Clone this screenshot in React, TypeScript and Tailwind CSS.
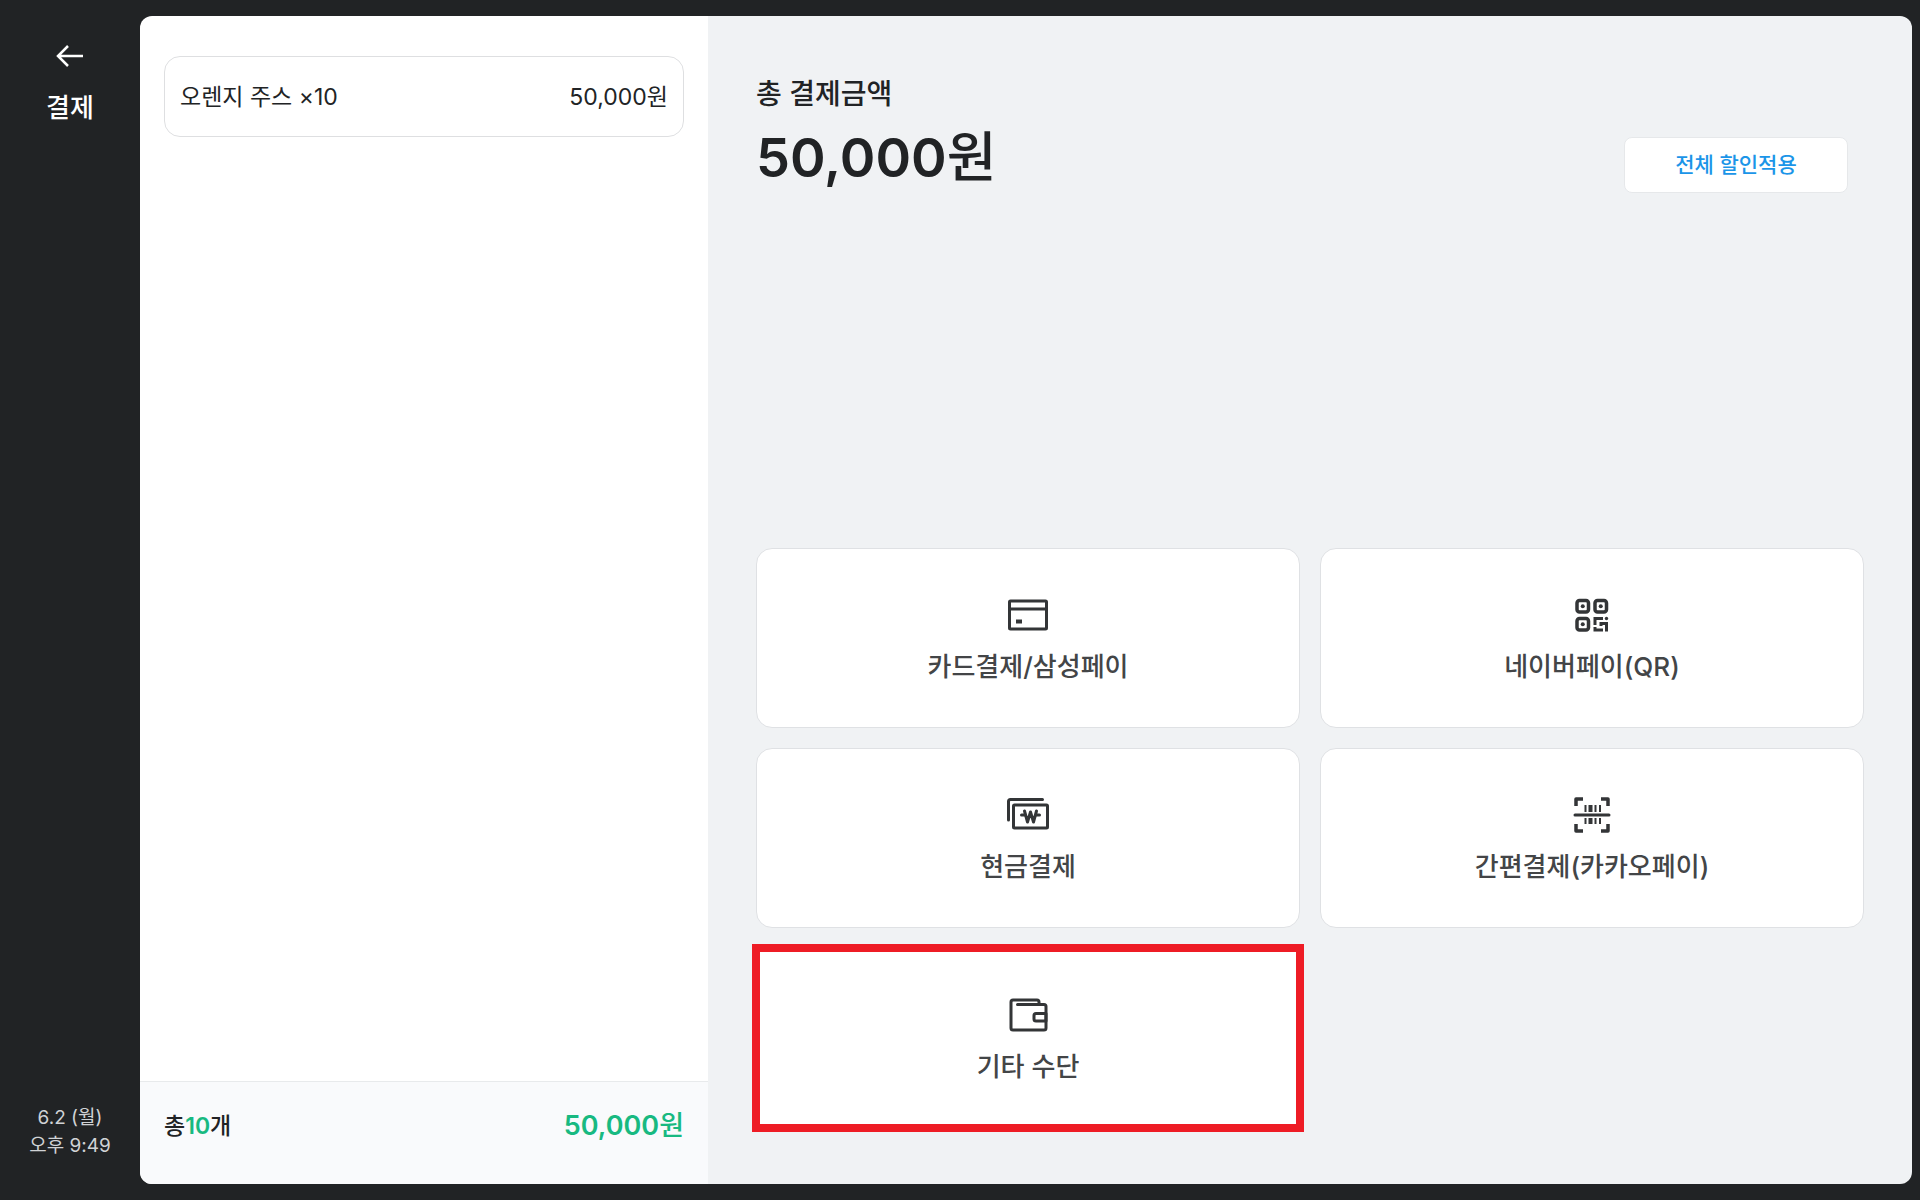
import type { ReactNode } from 'react';

function BackIcon() {
  return (
    <svg className="h-8 w-8" viewBox="0 0 32 32" fill="none" stroke="currentColor" strokeWidth="2.500" aria-hidden="true">
      <path d="M29 16H4M14 6L4 16l10 10" />
    </svg>
  );
}

function IconFrame({ children }: { children: ReactNode }) {
  return (
    <svg
      className="h-12 w-12 text-[#333537]"
      viewBox="0 0 48 48"
      fill="none"
      stroke="currentColor"
      strokeWidth="3"
      strokeLinecap="round"
      strokeLinejoin="round"
      aria-hidden="true"
    >
      {children}
    </svg>
  );
}

function CardIcon() {
  return (
    <IconFrame>
      <rect x="5.500" y="10" width="37" height="28" rx="1" />
      <path d="M5.500 18h37" />
      <path d="M12 28.500h6v4h-6z" fill="currentColor" stroke="none" />
    </IconFrame>
  );
}

function QrIcon() {
  return (
    <IconFrame>
      <g strokeWidth="3.500">
        <rect x="9" y="9.500" width="11.500" height="11.500" rx="2.500" />
        <rect x="27" y="9.500" width="11.500" height="11.500" rx="2.500" />
        <rect x="9" y="27.500" width="11.500" height="11.500" rx="2.500" />
      </g>
      <g fill="currentColor" stroke="none">
        <circle cx="14.750" cy="15.250" r="2" />
        <circle cx="32.750" cy="15.250" r="2" />
        <circle cx="14.750" cy="33.250" r="2" />
        <circle cx="38.500" cy="27.500" r="1.700" />
      </g>
      <path d="M35 27.500h-8V34M27 36v3h8M33 35v-2.500h7M38.500 32.500V40.500" strokeLinecap="butt" strokeLinejoin="miter" />
    </IconFrame>
  );
}

function CashIcon() {
  return (
    <IconFrame>
      <path d="M4.500 29V10.500a2 2 0 0 1 2-2h32" />
      <rect x="9.500" y="14" width="34" height="23" rx="1" />
      <path d="M20.500 20l3 11 3-10 3 10 3-11" />
      <path d="M17.500 24h3.500M32 24h3.500" />
    </IconFrame>
  );
}

function BarcodeIcon() {
  return (
    <IconFrame>
      <path d="M8 15V8h7M33 8h7v7M8 33v7h7M33 40h7v-7" strokeLinecap="butt" strokeWidth="3.500" />
      <path d="M7 24h34" />
      <path d="M17.500 14v7M27.500 14v7M32 14v7M17.500 27v6M27.500 27v6M32 27v6" strokeWidth="2" strokeLinecap="butt" />
      <path d="M22.500 14v7M22.500 27v6" strokeWidth="4" strokeLinecap="butt" />
    </IconFrame>
  );
}

function WalletIcon() {
  return (
    <IconFrame>
      <path d="M13.500 13.500H40a2 2 0 0 1 2 2V37a2 2 0 0 1-2 2H9a2 2 0 0 1-2-2V11a2 2 0 0 1 2-2h24a2 2 0 0 1 2 2v2" />
      <path d="M42 22.500H32a2 2 0 0 0-2 2v3.500a2 2 0 0 0 2 2h10z" />
    </IconFrame>
  );
}

const methods = [
  { label: '카드결제/삼성페이', icon: <CardIcon /> },
  { label: '네이버페이(QR)', icon: <QrIcon /> },
  { label: '현금결제', icon: <CashIcon /> },
  { label: '간편결제(카카오페이)', icon: <BarcodeIcon /> },
  { label: '기타 수단', icon: <WalletIcon />, highlighted: true },
];

export default function App() {
  return (
    <div className="flex min-h-screen bg-[#212325] font-['Inter','Noto_Sans_CJK_KR',sans-serif] text-[#212325]">
      <aside className="flex w-[140px] shrink-0 flex-col items-center justify-between pt-10 pb-10 text-white">
        <div className="flex flex-col items-center gap-4">
          <button type="button" aria-label="뒤로">
            <BackIcon />
          </button>
          <h1 className="text-[26px] leading-10 font-medium">결제</h1>
        </div>
        <p className="text-center text-[19px] leading-7 text-[#d0d2d5]">
          6.2 (월)
          <br />
          오후 9:49
        </p>
      </aside>

      <div className="my-4 mr-2 flex flex-1 overflow-hidden rounded-xl">
        <section className="flex w-[568px] shrink-0 flex-col justify-between bg-white">
          <ul className="px-6 pt-10">
            <li className="flex h-[81px] items-center justify-between rounded-2xl border border-[#dedfe1] px-[15px] pt-0.5 text-[23px]">
              <span>오렌지 주스 ×10</span>
              <span>50,000원</span>
            </li>
          </ul>
          <div className="flex h-[103px] items-start justify-between border-t border-[#e8eaec] bg-[#f9fafc] px-6 pt-6 leading-10">
            <span className="text-[23px] font-medium">
              총<span className="font-semibold text-[#18b981]">10</span>개
            </span>
            <span className="text-[27px] font-semibold text-[#18b981]">
              50,000<span className="font-medium">원</span>
            </span>
          </div>
        </section>

        <main className="flex flex-1 flex-col justify-between bg-[#f0f2f4] px-12 pt-[58px] pb-14">
          <div className="flex items-end justify-between pr-4">
            <div>
              <h2 className="text-[28px] leading-10 font-medium">총 결제금액</h2>
              <p className="pt-1 text-[54px] leading-[80px] font-semibold">
                50,000<span className="font-medium">원</span>
              </p>
            </div>
            <button
              type="button"
              className="mb-[5px] h-14 w-[224px] rounded-lg border border-[#e6e8ea] bg-white text-[21px] font-medium text-[#1b95e8]"
            >
              전체 할인적용
            </button>
          </div>

          <div className="grid grid-cols-2 gap-5">
            {methods.map((method) => (
              <button
                key={method.label}
                type="button"
                className={`flex h-[180px] flex-col items-center justify-center bg-white pt-0.5 text-[26px] leading-10 font-medium text-[#434547] ${
                  method.highlighted ? 'outline-8 -outline-offset-4 outline-[#ee1c25]' : 'rounded-2xl border border-[#dfe1e4]'
                }`}
              >
                {method.icon}
                <span className="mt-2">{method.label}</span>
              </button>
            ))}
          </div>
        </main>
      </div>
    </div>
  );
}
